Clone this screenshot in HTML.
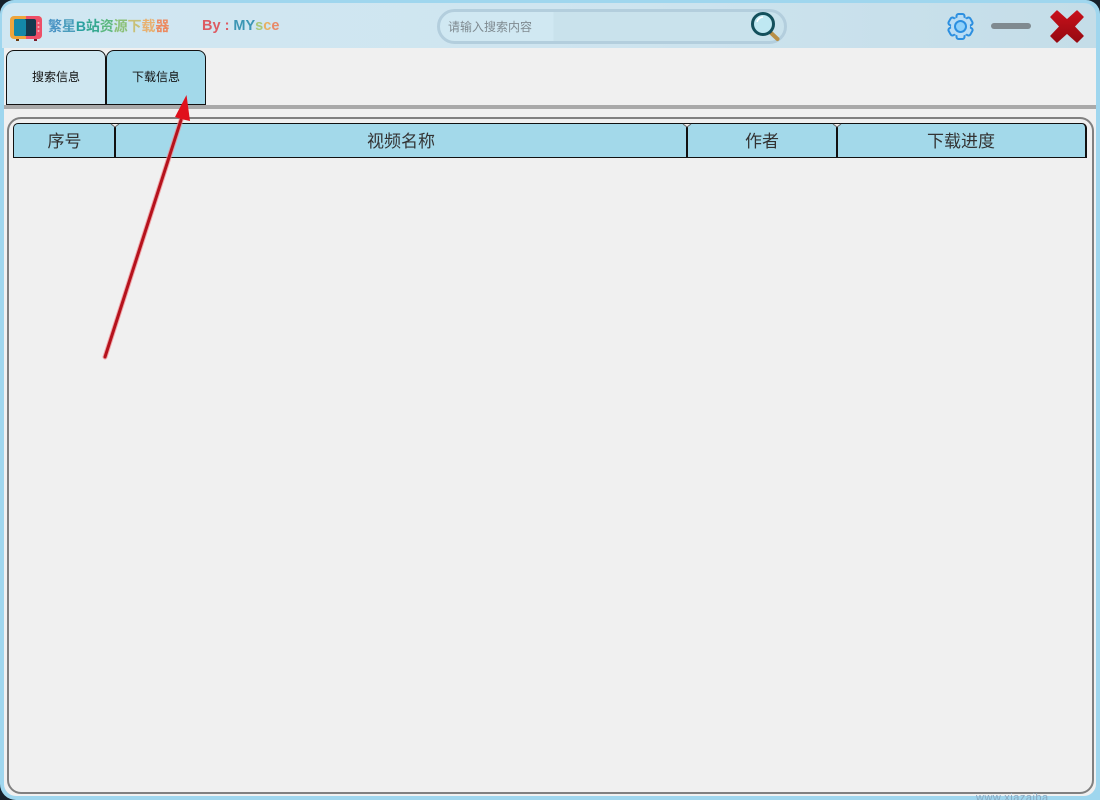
<!DOCTYPE html>
<html><head><meta charset="utf-8"><style>
*{box-sizing:border-box;margin:0;padding:0}
html,body{width:1100px;height:800px;overflow:hidden;background:#16202a;font-family:"Liberation Sans","Noto Sans CJK SC",sans-serif;color:#222}
.a{position:absolute}
#outer{left:0;top:0;width:1100px;height:800px;background:#9fd6ee;border-radius:14px 14px 0 16px}
#bar{left:2px;top:3px;width:1094px;height:45px;background:linear-gradient(90deg,#d0e7f2 0%,#cfe5f0 50%,#c4dde8 100%);border-radius:12px 12px 0 0}
#body{left:4px;top:48px;width:1092px;height:748px;background:#f0f0f0;border-radius:0 0 12px 12px}
.tab{top:50px;width:100px;height:55px;border:1px solid #111;border-radius:8px 8px 0 0;font-size:12px;line-height:53px;text-align:center;color:#111}
.th{top:123px;height:35px;background:#a3d9ea;border-top:1px solid #111;border-bottom:1px solid #111;font-size:17px;line-height:36px;text-align:center;color:#333}
.dv{top:123px;width:2px;height:35px;background:#111}
</style></head><body>
<div id="outer" class="a"></div>
<div id="bar" class="a"></div>
<div id="body" class="a"></div>

<svg class="a" style="left:10px;top:15px" width="33" height="28" viewBox="0 0 33 28">
<rect x="0" y="1" width="32" height="23" rx="4" fill="#eea53c"/>
<path d="M16 1h12a4 4 0 0 1 4 4v15a4 4 0 0 1-4 4H16z" fill="#ee4f68"/>
<rect x="4" y="4" width="22" height="17" rx="2" fill="#14394e"/>
<rect x="4" y="4" width="12" height="17" rx="2" fill="#1488a8"/>
<circle cx="28.500" cy="8" r="1" fill="#f7b0bc"/><circle cx="28.500" cy="12" r="1" fill="#f7b0bc"/><circle cx="28.500" cy="16" r="1" fill="#f7b0bc"/>
<rect x="6" y="24" width="3" height="2" fill="#6a3a10"/><rect x="24" y="24" width="3" height="2" fill="#7a1a28"/>
</svg>
<div class="a" style="left:48px;top:17px;font-size:14px;line-height:19px;font-weight:700;white-space:nowrap;letter-spacing:-.1px"><span style="color:#4a94c4">繁</span><span style="color:#4a9cbc">星</span><span style="color:#2aa0a0">B</span><span style="color:#35a890">站</span><span style="color:#5cb880">资</span><span style="color:#8cc078">源</span><span style="color:#c8c078">下</span><span style="color:#e8b070">载</span><span style="color:#ec8a60">器</span></div>
<div class="a" style="left:202px;top:17px;font-size:14.500px;line-height:19px;font-weight:700;white-space:nowrap"><span style="color:#dd5a62">By : </span><span style="color:#3c96b4">MY</span><span style="color:#a8c878">s</span><span style="color:#e8b060">c</span><span style="color:#e88a68">e</span></div>

<div class="a" style="left:437px;top:9px;width:350px;height:35px;border:3px solid #b3cedd;border-radius:18px;background:linear-gradient(90deg,#d0e8f2 0,#d0e8f2 33%,#c9e2ec 33%,#c9e2ec 100%)"></div>
<div class="a" style="left:448px;top:18px;font-size:12px;line-height:18px;color:#7f8a90;white-space:nowrap">请输入搜索内容</div>
<svg class="a" style="left:749px;top:10px" width="32" height="32" viewBox="0 0 32 32">
<path d="M20 21l8.500 8" stroke="#b89048" stroke-width="4" stroke-linecap="round"/>
<path d="M19 20l3 3" stroke="#2a3a40" stroke-width="3"/>
<circle cx="14" cy="14" r="10.500" fill="#bfe8f2" stroke="#14505c" stroke-width="3"/>
<path d="M8 12a6.500 6.500 0 0 1 6-5" fill="none" stroke="#fff" stroke-width="1.500"/>
</svg>

<svg class="a" style="left:947px;top:13px" width="27" height="27" viewBox="0 0 27 27">
<g fill="#b9dcf4" stroke="#2c8fe0" stroke-width="2" stroke-linejoin="round">
<rect x="9.500" y="1" width="8" height="25" rx="2"/>
<rect x="9.500" y="1" width="8" height="25" rx="2" transform="rotate(60 13.500 13.500)"/>
<rect x="9.500" y="1" width="8" height="25" rx="2" transform="rotate(120 13.500 13.500)"/>
</g>
<circle cx="13.500" cy="13.500" r="9.500" fill="#b9dcf4"/>
<circle cx="13.500" cy="13.500" r="5.500" fill="#8fd0fa" stroke="#2c8fe0" stroke-width="2"/>
</svg>
<div class="a" style="left:991px;top:23px;width:40px;height:6px;border-radius:3px;background:#808a90"></div>
<svg class="a" style="left:1049px;top:9px" width="36" height="35" viewBox="0 0 36 35">
<defs><linearGradient id="g" x1="0" y1="0" x2="0" y2="1"><stop offset="0" stop-color="#c8101a"/><stop offset="1" stop-color="#960a12"/></linearGradient></defs>
<path d="M8 2L18 11 28 2 34 8 25 17.500 34 27 28 33 18 24 8 33 2 27 11 17.500 2 8z" fill="url(#g)" stroke="url(#g)" stroke-width="1.500" stroke-linejoin="round"/>
</svg>

<div class="a tab" style="left:6px;background:#cfe7f1">搜索信息</div>
<div class="a tab" style="left:106px;background:#a3d9ea">下载信息</div>
<div class="a" style="left:4px;top:105px;width:1092px;height:4px;background:#a9a9a9"></div>

<div class="a" style="left:7px;top:117px;width:1087px;height:677px;border:2px solid #808080;border-radius:14px"></div>
<div class="a th" style="left:13px;width:102px;border-left:1px solid #111;border-radius:5px 0 0 0">序号</div>
<div class="a th" style="left:115px;width:572px">视频名称</div>
<div class="a th" style="left:687px;width:150px">作者</div>
<div class="a th" style="left:837px;width:250px;border-right:2px solid #111;border-radius:0 5px 0 0">下载进度</div>
<div class="a dv" style="left:114px"></div>
<div class="a dv" style="left:686px"></div>
<div class="a dv" style="left:836px"></div>

<svg class="a" style="left:0;top:0" width="1100" height="800" viewBox="0 0 1100 800">
<path d="M111 124l4 3 4-3M683 124l4 3 4-3M833 124l4 3 4-3" fill="#f0f0f0" stroke="#666" stroke-width="1"/>
<path d="M105 357L181 120" stroke="#f08a90" stroke-width="5" stroke-linecap="round" opacity=".7"/>
<path d="M105 357L181 120" stroke="#b5121c" stroke-width="3" stroke-linecap="round"/>
<path d="M186.500 95L175 117 181 119 190 121z" fill="#e0101c"/>
</svg>
<div class="a" style="left:976px;top:791px;width:100px;height:9px;overflow:hidden;font-size:11px;line-height:14px;color:#8aa8c0;white-space:nowrap;letter-spacing:.5px">www.xiazaiba</div>
</body></html>
